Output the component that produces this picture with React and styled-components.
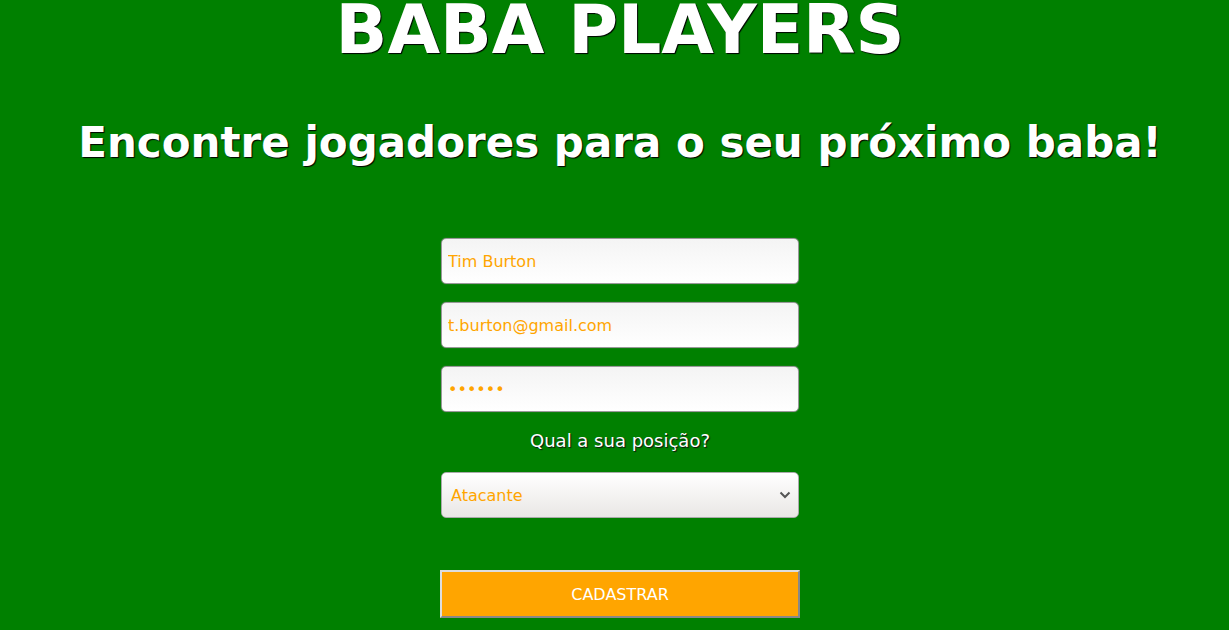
import React from 'react'
import styled, { createGlobalStyle } from 'styled-components'

const GlobalStyle = createGlobalStyle`
  html, body {
    margin: 0;
    padding: 0;
    background: green;
  }
  body {
    font-family: "DejaVu Sans", sans-serif;
    overflow: hidden;
  }
`

function App() {
    return (
        <Page>
            <GlobalStyle />
            <Title>BABA PLAYERS</Title>
            <Subtitle>Encontre jogadores para o seu próximo baba!</Subtitle>
            <Form onSubmit={e => e.preventDefault()}>
                <Field type="text" defaultValue="Tim Burton" />
                <Field type="email" defaultValue="t.burton@gmail.com" />
                <Field type="password" defaultValue="123456" />
                <Label>Qual a sua posição?</Label>
                <SelectWrap>
                    <Select defaultValue="atacante">
                        <option value="goleiro">Goleiro</option>
                        <option value="zagueiro">Zagueiro</option>
                        <option value="meia">Meia</option>
                        <option value="atacante">Atacante</option>
                    </Select>
                    <Arrow width="12" height="8" viewBox="0 0 12 8">
                        <path d="M1.5 1.5 L6 6 L10.5 1.5" fill="none" stroke="#555" strokeWidth="2" />
                    </Arrow>
                </SelectWrap>
                <Button type="submit">CADASTRAR</Button>
            </Form>
        </Page>
    )
}

export default App

const Page = styled.div`
    min-height: 100vh;
    padding-left: 11px;
    background: green;
    color: white;
    text-align: center;
`

const Title = styled.h1`
    margin: 0;
    font-size: 68px;
    line-height: 60px;
    font-weight: bold;
    color: white;
    text-shadow: 1px 1px 1px #000;
`

const Subtitle = styled.h2`
    margin: 58px 0 0;
    font-size: 42px;
    line-height: 50px;
    font-weight: bold;
    color: white;
    text-shadow: 1px 1px 1px #000;
`

const Form = styled.form`
    display: flex;
    flex-direction: column;
    align-items: center;
    margin-top: 70px;
`

const Field = styled.input`
    box-sizing: border-box;
    width: 358px;
    height: 46px;
    margin-bottom: 18px;
    padding: 0 6px;
    border: 1px solid #999;
    border-radius: 5px;
    background: linear-gradient(to bottom, #f4f4f4, #ffffff);
    box-shadow: 0 0 1px #888;
    color: orange;
    font-family: "DejaVu Sans", sans-serif;
    font-size: 16px;
    outline: none;

    &:last-of-type {
        margin-bottom: 0;
    }
`

const Label = styled.p`
    margin: 19px 0 0;
    font-size: 18px;
    line-height: 20px;
    color: white;
    text-shadow: 1px 1px 1px #111;
`

const SelectWrap = styled.div`
    position: relative;
    margin-top: 21px;
    width: 358px;
    height: 46px;
`

const Select = styled.select`
    appearance: none;
    box-sizing: border-box;
    width: 100%;
    height: 100%;
    padding: 0 30px 0 9px;
    border: 1px solid #aaa;
    border-radius: 5px;
    background: linear-gradient(to bottom, #ffffff, #e9e7e5);
    color: orange;
    font-family: "DejaVu Sans", sans-serif;
    font-size: 16px;
    outline: none;
`

const Arrow = styled.svg`
    position: absolute;
    right: 8px;
    top: 19px;
    pointer-events: none;
`

const Button = styled.button`
    box-sizing: border-box;
    margin-top: 52px;
    width: 360px;
    height: 48px;
    border: 2px solid;
    border-color: #ddd #888 #888 #ddd;
    background: orange;
    color: white;
    font-family: "DejaVu Sans", sans-serif;
    font-size: 16px;
    cursor: pointer;
`
